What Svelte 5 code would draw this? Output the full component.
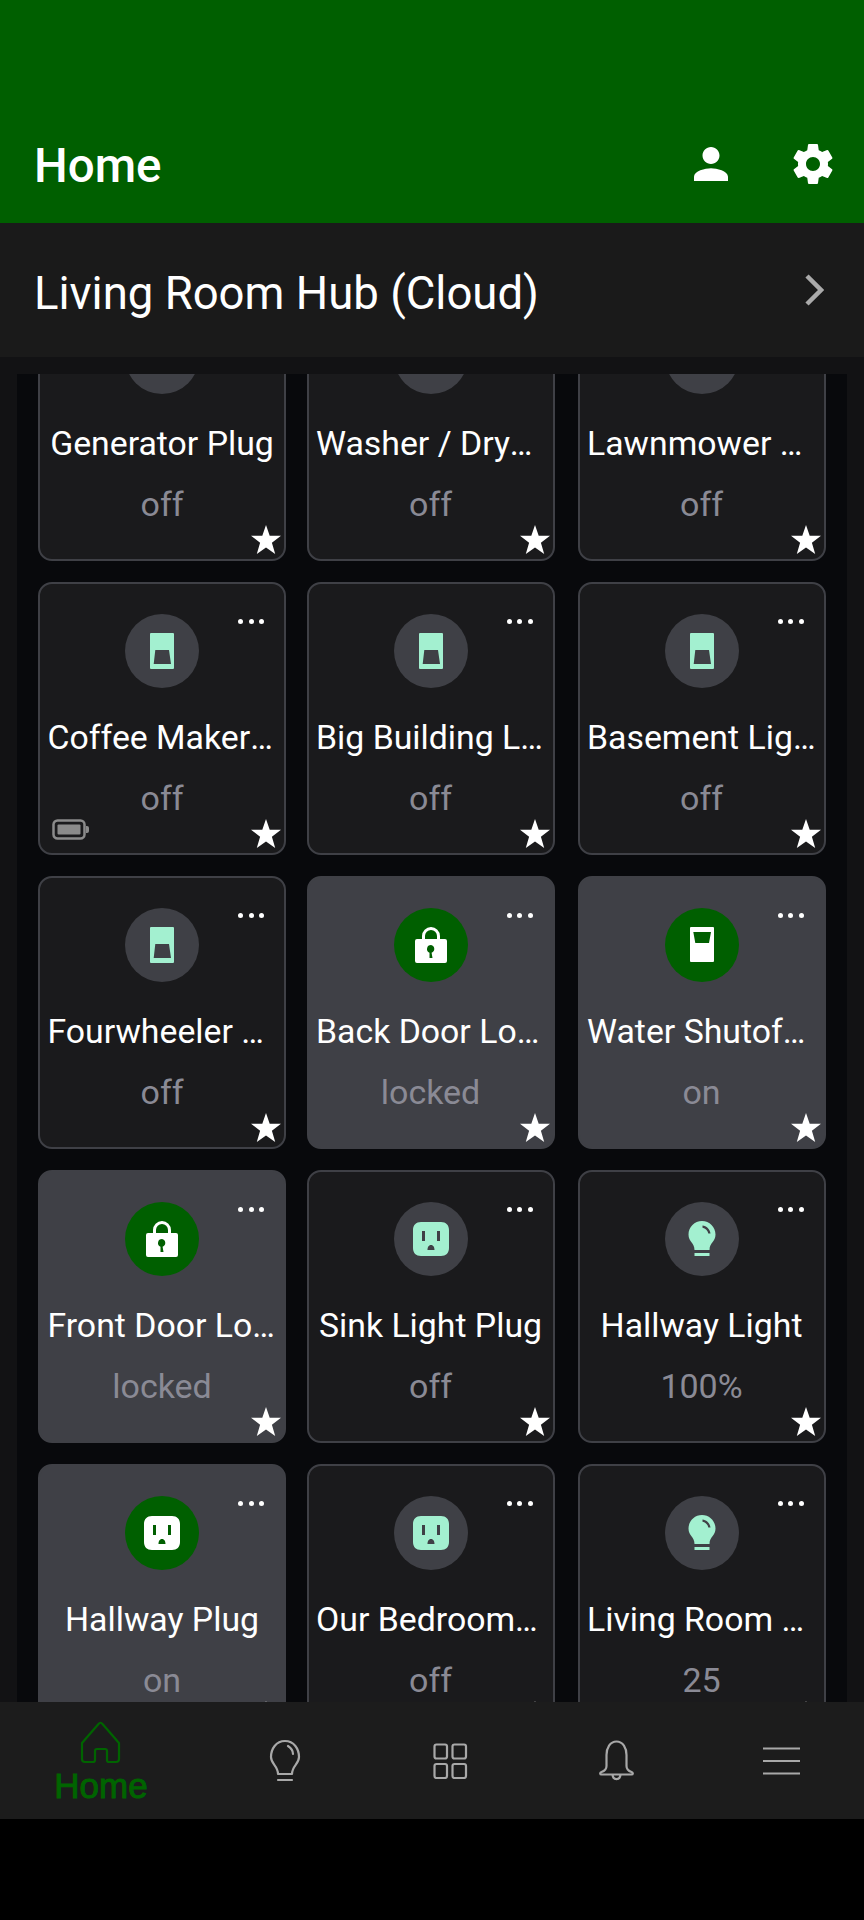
<script>
  const rows = [
    [
      { name: "Generator Plug", status: "off", icon: "plug" },
      { name: "Washer / Dryer Plug", status: "off", icon: "plug" },
      { name: "Lawnmower Charger", status: "off", icon: "plug" },
    ],
    [
      { name: "Coffee Maker Switch", status: "off", icon: "switch", battery: true },
      { name: "Big Building Light", status: "off", icon: "switch" },
      { name: "Basement Light Switch", status: "off", icon: "switch" },
    ],
    [
      { name: "Fourwheeler Charger", status: "off", icon: "switch" },
      { name: "Back Door Lock Device", status: "locked", icon: "lock", active: true },
      { name: "Water Shutoff Valve", status: "on", icon: "switch", active: true },
    ],
    [
      { name: "Front Door Lock Device", status: "locked", icon: "lock", active: true },
      { name: "Sink Light Plug", status: "off", icon: "plug" },
      { name: "Hallway Light", status: "100%", icon: "bulb" },
    ],
    [
      { name: "Hallway Plug", status: "on", icon: "plug", active: true },
      { name: "Our Bedroom Plug", status: "off", icon: "plug" },
      { name: "Living Room Light", status: "25", icon: "bulb" },
    ],
  ];
  const devices = rows.flat();
</script>

<div class="screen">
  <header>
    <h1>Home</h1>
    <svg class="person" viewBox="4 4 16 16" aria-hidden="true">
      <path d="M12 12c2.2 0 4-1.8 4-4s-1.8-4-4-4-4 1.800-4 4 1.800 4 4 4zm0 2c-2.700 0-8 1.300-8 4v2h16v-2c0-2.700-5.300-4-8-4z" />
    </svg>
    <svg class="gear" viewBox="0 0 24 24" aria-hidden="true">
      <path d="M19.430 12.980c.04-.32.07-.64.07-.98s-.03-.66-.07-.98l2.110-1.650c.19-.15.24-.42.12-.64l-2-3.460c-.12-.22-.39-.3-.61-.22l-2.490 1c-.52-.4-1.080-.73-1.690-.98l-.38-2.650C14.460 2.180 14.250 2 14 2h-4c-.25 0-.46.18-.49.42l-.38 2.650c-.61.25-1.170.59-1.690.98l-2.490-1c-.23-.09-.49 0-.61.22l-2 3.460c-.13.22-.07.49.12.64l2.110 1.650c-.04.32-.07.65-.07.98s.03.66.07.98l-2.110 1.650c-.19.15-.24.42-.12.64l2 3.460c.12.22.39.3.61.22l2.490-1c.52.4 1.080.73 1.690.98l.38 2.650c.03.24.24.42.49.42h4c.25 0 .46-.18.49-.42l.38-2.650c.61-.25 1.170-.59 1.690-.98l2.490 1c.23.09.49 0 .61-.22l2-3.460c.12-.22.07-.49-.12-.64l-2.110-1.650zM12 15.500c-1.930 0-3.500-1.570-3.500-3.500s1.570-3.500 3.500-3.500 3.500 1.570 3.500 3.500-1.570 3.500-3.500 3.500z" />
    </svg>
  </header>

  <div class="hub">
    <span>Living Room Hub (Cloud)</span>
    <svg viewBox="0 0 20 34" aria-hidden="true"><path d="M3 3l14 14L3 31" /></svg>
  </div>

  <div class="band"></div>

  <main>
    <div class="grid">
      {#each devices as d}
        <div class="card" class:active={d.active}>
          <div class="circle">
            <svg viewBox="0 0 48 48" aria-hidden="true">
              {#if d.icon === "switch" && d.active}
                <path fill-rule="evenodd" d="M13 6h22a1 1 0 0 1 1 1v33a1 1 0 0 1-1 1H13a1 1 0 0 1-1-1V7a1 1 0 0 1 1-1zm2.300 5l2 11h13.700l2-11z" />
              {:else if d.icon === "switch"}
                <path fill-rule="evenodd" d="M13 6h22a1 1 0 0 1 1 1v34a1 1 0 0 1-1 1H13a1 1 0 0 1-1-1V7a1 1 0 0 1 1-1zm4.300 17l-1.600 14H33l-2-14z" />
              {:else if d.icon === "lock"}
                <path fill-rule="evenodd" d="M15 18v-3a9 9 0 0 1 18 0v3h5a2 2 0 0 1 2 2v20a2 2 0 0 1-2 2H10a2 2 0 0 1-2-2V20a2 2 0 0 1 2-2zm3 0h12v-3a6 6 0 0 0-12 0zm6 6a4 4 0 0 0-1.500 7.700L22.500 37h3l-.9-5.300A4 4 0 0 0 24 24z" />
              {:else if d.icon === "plug"}
                <path fill-rule="evenodd" d="M14 7h20c5 0 8 3 8 8v18c0 5-3 8-8 8H14c-5 0-8-3-8-8V15c0-5 3-8 8-8zm1 9v10h3V16zm15 0v10h3V16zm-6 14c-2.500 0-3.500 2.500-3.500 5h7c0-2.500-1-5-3.500-5z" />
              {:else}
                <path fill-rule="evenodd" d="M24 6c7.500 0 13.500 6 13.500 13.500 0 7-6 8.500-6 15.500h-15c0-7-6-8.500-6-15.500C10.500 12 16.500 6 24 6zm.5 4.500v2.300c3 .5 5.300 2.800 5.800 5.700h2.200c-.5-4-4-7.700-8-8zM16.500 38h15v3h-15z" />
              {/if}
            </svg>
          </div>
          <div class="name">{d.name}</div>
          <div class="status">{d.status}</div>
          <div class="dots"><i></i><i></i><i></i></div>
          {#if d.battery}
            <svg class="battery" viewBox="0 0 37 21" aria-hidden="true">
              <rect x="1.500" y="1.500" width="31" height="18" rx="4" fill="none" stroke="#8b8b8b" stroke-width="2.500" />
              <rect x="5.500" y="5.500" width="23" height="10" rx="1" fill="#8b8b8b" />
              <path d="M34 7h1a2 2 0 0 1 2 2v3a2 2 0 0 1-2 2h-1z" fill="#8b8b8b" />
            </svg>
          {/if}
          <svg class="star" viewBox="0 0 30 30" aria-hidden="true">
            <path d="M15 0l3.700 10.700H30l-9.100 7 3.300 11.300L15 22.400 5.800 29l3.300-11.300-9.100-7h11.300z" />
          </svg>
        </div>
      {/each}
    </div>
  </main>

  <nav>
    <div class="tab home">
      <svg width="41" height="43" viewBox="0 0 41 43" aria-hidden="true">
        <path d="M2 22L18.500 3q2-2.500 4 0L39 22v16q0 3-3 3h-7q-2 0-2-2v-9q0-2-2-2h-8q-2 0-2 2v9q0 2-2 2H5q-3 0-3-3z" />
      </svg>
      <span>Home</span>
    </div>
    <div class="tab">
      <svg width="32" height="43" viewBox="0 0 32 43" aria-hidden="true">
        <path d="M16 2C7 2 2 10 2 18c0 7 7 9 7 17h14c0-8 7-10 7-17 0-8-5-16-14-16zM9 41h14M19 7c3 2 5 5 5 8" />
      </svg>
    </div>
    <div class="tab">
      <svg width="35" height="36" viewBox="0 0 35 36" aria-hidden="true">
        <rect x="1.500" y="1.500" width="12.500" height="14" rx="2" />
        <rect x="19.500" y="1.500" width="13.500" height="14" rx="2" />
        <rect x="1.500" y="21" width="12.500" height="14" rx="2" />
        <rect x="19.500" y="21" width="13.500" height="14" rx="2" />
      </svg>
    </div>
    <div class="tab">
      <svg width="37" height="41" viewBox="0 0 37 41" aria-hidden="true">
        <path d="M18.500 1.500C12 1.500 8.500 8 8.500 15v11c0 3-2 5-5 6-2 1-1.500 2.500 0 2.500h30c1.500 0 2-1.500 0-2.500-3-1-5-3-5-6V15c0-7-3.500-13.500-10-13.500zM14.500 35c1 5.500 7 5.500 8 0" />
      </svg>
    </div>
    <div class="tab">
      <svg width="37" height="28" viewBox="0 0 37 28" aria-hidden="true">
        <path d="M0 1.500h37M0 14h37M0 26.500h37" />
      </svg>
    </div>
  </nav>
</div>

<style>
  :global(body) {
    background: #000;
  }

  .screen {
    width: 864px;
    height: 1920px;
    overflow: hidden;
    font-family: Roboto, "Liberation Sans", sans-serif;
    color: #fff;
    background: #000;
  }

  header {
    height: 223px;
    box-sizing: border-box;
    padding: 0 27px 32px 34px;
    display: flex;
    align-items: flex-end;
    background: #005f00;
  }

  h1 {
    flex: 1;
    margin: 0;
    font-size: 47.500px;
    font-weight: 500;
    line-height: 50px;
  }

  .person {
    width: 34px;
    height: 34px;
    margin: 0 61px 10px 0;
    fill: #fff;
  }

  .gear {
    width: 48px;
    height: 48px;
    margin-bottom: 3px;
    fill: #fff;
  }

  .hub {
    height: 134px;
    box-sizing: border-box;
    padding: 7px 40px 0 34px;
    display: flex;
    align-items: center;
    justify-content: space-between;
    background: #1a1a1a;
    font-size: 45.500px;
  }

  .hub svg {
    width: 20px;
    height: 34px;
    margin-top: -7px;
    fill: none;
    stroke: #aaa;
    stroke-width: 4.500;
  }

  .band {
    height: 17px;
    background: #121214;
  }

  main {
    height: 1328px;
    overflow: hidden;
    padding: 0 17px;
    background: #121214;
  }

  .grid {
    box-sizing: border-box;
    height: 1414px;
    margin-top: -86px;
    padding-left: 21px;
    background: #08090c;
    display: grid;
    grid-template-columns: 268.500px 271px 248px;
    grid-auto-rows: 273px;
    row-gap: 21px;
  }

  .card {
    position: relative;
    width: 248px;
    box-sizing: border-box;
    padding: 30px 7.500px 0;
    background: #1a1a1c;
    border: 2px solid #3f4046;
    border-radius: 14px;
    text-align: center;
  }

  .card.active {
    background: #3f4046;
  }

  .circle {
    width: 74px;
    height: 74px;
    margin: 0 auto;
    display: flex;
    align-items: center;
    justify-content: center;
    border-radius: 50%;
    background: #3f4046;
  }

  .circle svg {
    width: 48px;
    height: 48px;
    fill: #a3f0d0;
  }

  .active .circle {
    background: #005f00;
  }

  .active .circle svg {
    fill: #fff;
  }

  .name {
    margin-top: 31px;
    font-size: 33.800px;
    line-height: 38px;
    white-space: nowrap;
    overflow: hidden;
    text-overflow: ellipsis;
  }

  .status {
    margin-top: 22px;
    font-size: 34px;
    line-height: 38px;
    color: #8a8a95;
  }

  .dots {
    position: absolute;
    top: 35px;
    right: 20px;
    display: flex;
    gap: 5.500px;
  }

  .dots i {
    width: 5px;
    height: 5px;
    border-radius: 50%;
    background: #fff;
  }

  .star {
    position: absolute;
    right: 3px;
    bottom: 4px;
    width: 30px;
    height: 30px;
    fill: #fff;
  }

  .battery {
    position: absolute;
    left: 12px;
    bottom: 13px;
    width: 37px;
    height: 21px;
  }

  nav {
    height: 117px;
    box-sizing: border-box;
    padding-left: 4px;
    display: grid;
    grid-template-columns: 194px 174px 156px 176px 154px;
    background: #1c1c1c;
  }

  .tab {
    display: flex;
    flex-direction: column;
    align-items: center;
    justify-content: center;
  }

  .tab svg {
    display: block;
    fill: none;
    stroke: #a8a8a8;
    stroke-width: 2.200;
    stroke-linejoin: round;
    stroke-linecap: round;
  }

  .home svg {
    margin-top: 4px;
    margin-right: 2px;
    stroke: #006400;
  }

  .home span {
    margin-top: 4px;
    font-family: "Liberation Sans", Arial, sans-serif;
    font-size: 35px;
    line-height: 36px;
    color: #006400;
    -webkit-text-stroke: 1px #006400;
  }
</style>
